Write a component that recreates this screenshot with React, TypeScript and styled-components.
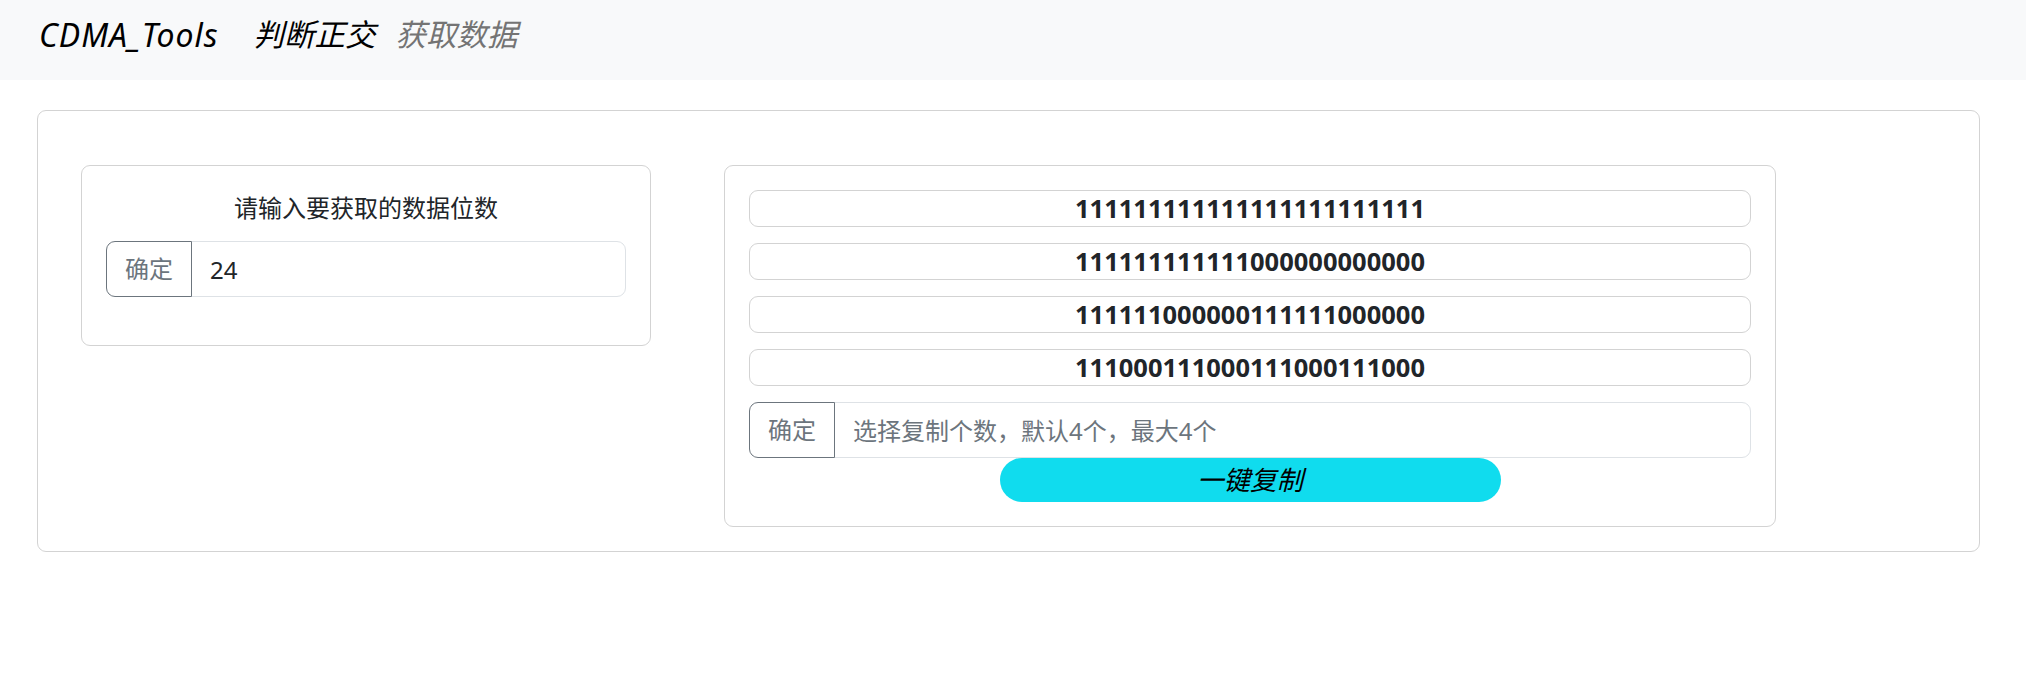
import React from "react";
import styled, { createGlobalStyle } from "styled-components";

const GlobalStyle = createGlobalStyle`
  html, body {
    margin: 0;
    padding: 0;
    background: #ffffff;
  }
  body {
    font-family: "Noto Sans", "Noto Sans CJK SC", sans-serif;
    color: #212529;
    font-size: 24px;
  }
  * { box-sizing: border-box; }
`;

const NavBar = styled.header`
  height: 80px;
  background: #f8f9fa;
  display: flex;
  align-items: flex-start;
  padding: 12px 0 0 39px;
`;

const Brand = styled.a`
  font-size: 32px;
  line-height: 45px;
  letter-spacing: 1px;
  font-style: italic;
  color: #000000;
  text-decoration: none;
  margin-right: 35px;
`;

const NavLink = styled.a<{ $active?: boolean }>`
  font-size: 30.5px;
  line-height: 45px;
  font-style: italic;
  color: ${(p) => (p.$active ? "#000000" : "#747474")};
  text-decoration: none;
  margin-right: 20px;
`;

const OuterCard = styled.main`
  margin: 30px 46px 0 37px;
  height: 442px;
  border: 1px solid #d3d3d3;
  border-radius: 9px;
  padding: 54px 0 0 43px;
  display: flex;
  align-items: flex-start;
  gap: 73px;
`;

const Card = styled.section<{ $width: number }>`
  width: ${(p) => p.$width}px;
  border: 1px solid #d3d3d3;
  border-radius: 9px;
  padding: 24px;
  display: flex;
  flex-direction: column;
`;

const Title = styled.div`
  text-align: center;
  font-size: 24px;
  line-height: 36px;
  margin-bottom: 15px;
  color: #212529;
`;

const InputGroup = styled.div<{ $mb?: number }>`
  display: flex;
  height: 56px;
  margin-bottom: ${(p) => p.$mb ?? 0}px;
`;

const GroupButton = styled.button`
  flex: 0 0 auto;
  height: 56px;
  padding: 0 18px;
  border: 1px solid #6c757d;
  border-radius: 9px 0 0 9px;
  background: #ffffff;
  color: #6c757d;
  font-family: "Noto Sans", "Noto Sans CJK SC", sans-serif;
  font-size: 24px;
  line-height: 36px;
  cursor: pointer;
  position: relative;
  z-index: 1;
`;

const GroupInput = styled.input`
  flex: 1 1 auto;
  min-width: 0;
  height: 56px;
  margin-left: -1px;
  padding: 0 18px;
  border: 1px solid #dee2e6;
  border-radius: 0 9px 9px 0;
  font-family: "Noto Sans", "Noto Sans CJK SC", sans-serif;
  font-size: 24px;
  color: #212529;
  outline: none;
  &::placeholder {
    color: #6c757d;
    opacity: 1;
  }
`;

const CodeList = styled.div`
  display: flex;
  flex-direction: column;
  gap: 16px;
  margin-bottom: 16px;
`;

const CodeRow = styled.div`
  height: 37px;
  border: 1px solid #d3d3d3;
  border-radius: 9px;
  display: flex;
  align-items: center;
  justify-content: center;
  font-weight: 700;
  font-size: 25.5px;
  line-height: 35px;
  color: #212529;
`;

const CopyButton = styled.button`
  align-self: center;
  width: 50%;
  height: 44px;
  border: none;
  border-radius: 22px;
  background: #10dcee;
  color: #000000;
  font-family: "Noto Sans", "Noto Sans CJK SC", sans-serif;
  font-size: 26.5px;
  font-style: italic;
  line-height: 44px;
  padding: 0;
  cursor: pointer;
`;

const codes = [
  "111111111111111111111111",
  "111111111111000000000000",
  "111111000000111111000000",
  "111000111000111000111000",
];

export default function App() {
  return (
    <>
      <GlobalStyle />
      <NavBar>
        <Brand href="#">CDMA_Tools</Brand>
        <NavLink href="#" $active>
          判断正交
        </NavLink>
        <NavLink href="#">获取数据</NavLink>
      </NavBar>
      <OuterCard>
        <Card $width={570}>
          <Title>请输入要获取的数据位数</Title>
          <InputGroup $mb={24}>
            <GroupButton>确定</GroupButton>
            <GroupInput defaultValue="24" />
          </InputGroup>
        </Card>
        <Card $width={1052}>
          <CodeList>
            {codes.map((c) => (
              <CodeRow key={c}>{c}</CodeRow>
            ))}
          </CodeList>
          <InputGroup>
            <GroupButton>确定</GroupButton>
            <GroupInput placeholder="选择复制个数，默认4个，最大4个" />
          </InputGroup>
          <CopyButton>一键复制</CopyButton>
        </Card>
      </OuterCard>
    </>
  );
}
